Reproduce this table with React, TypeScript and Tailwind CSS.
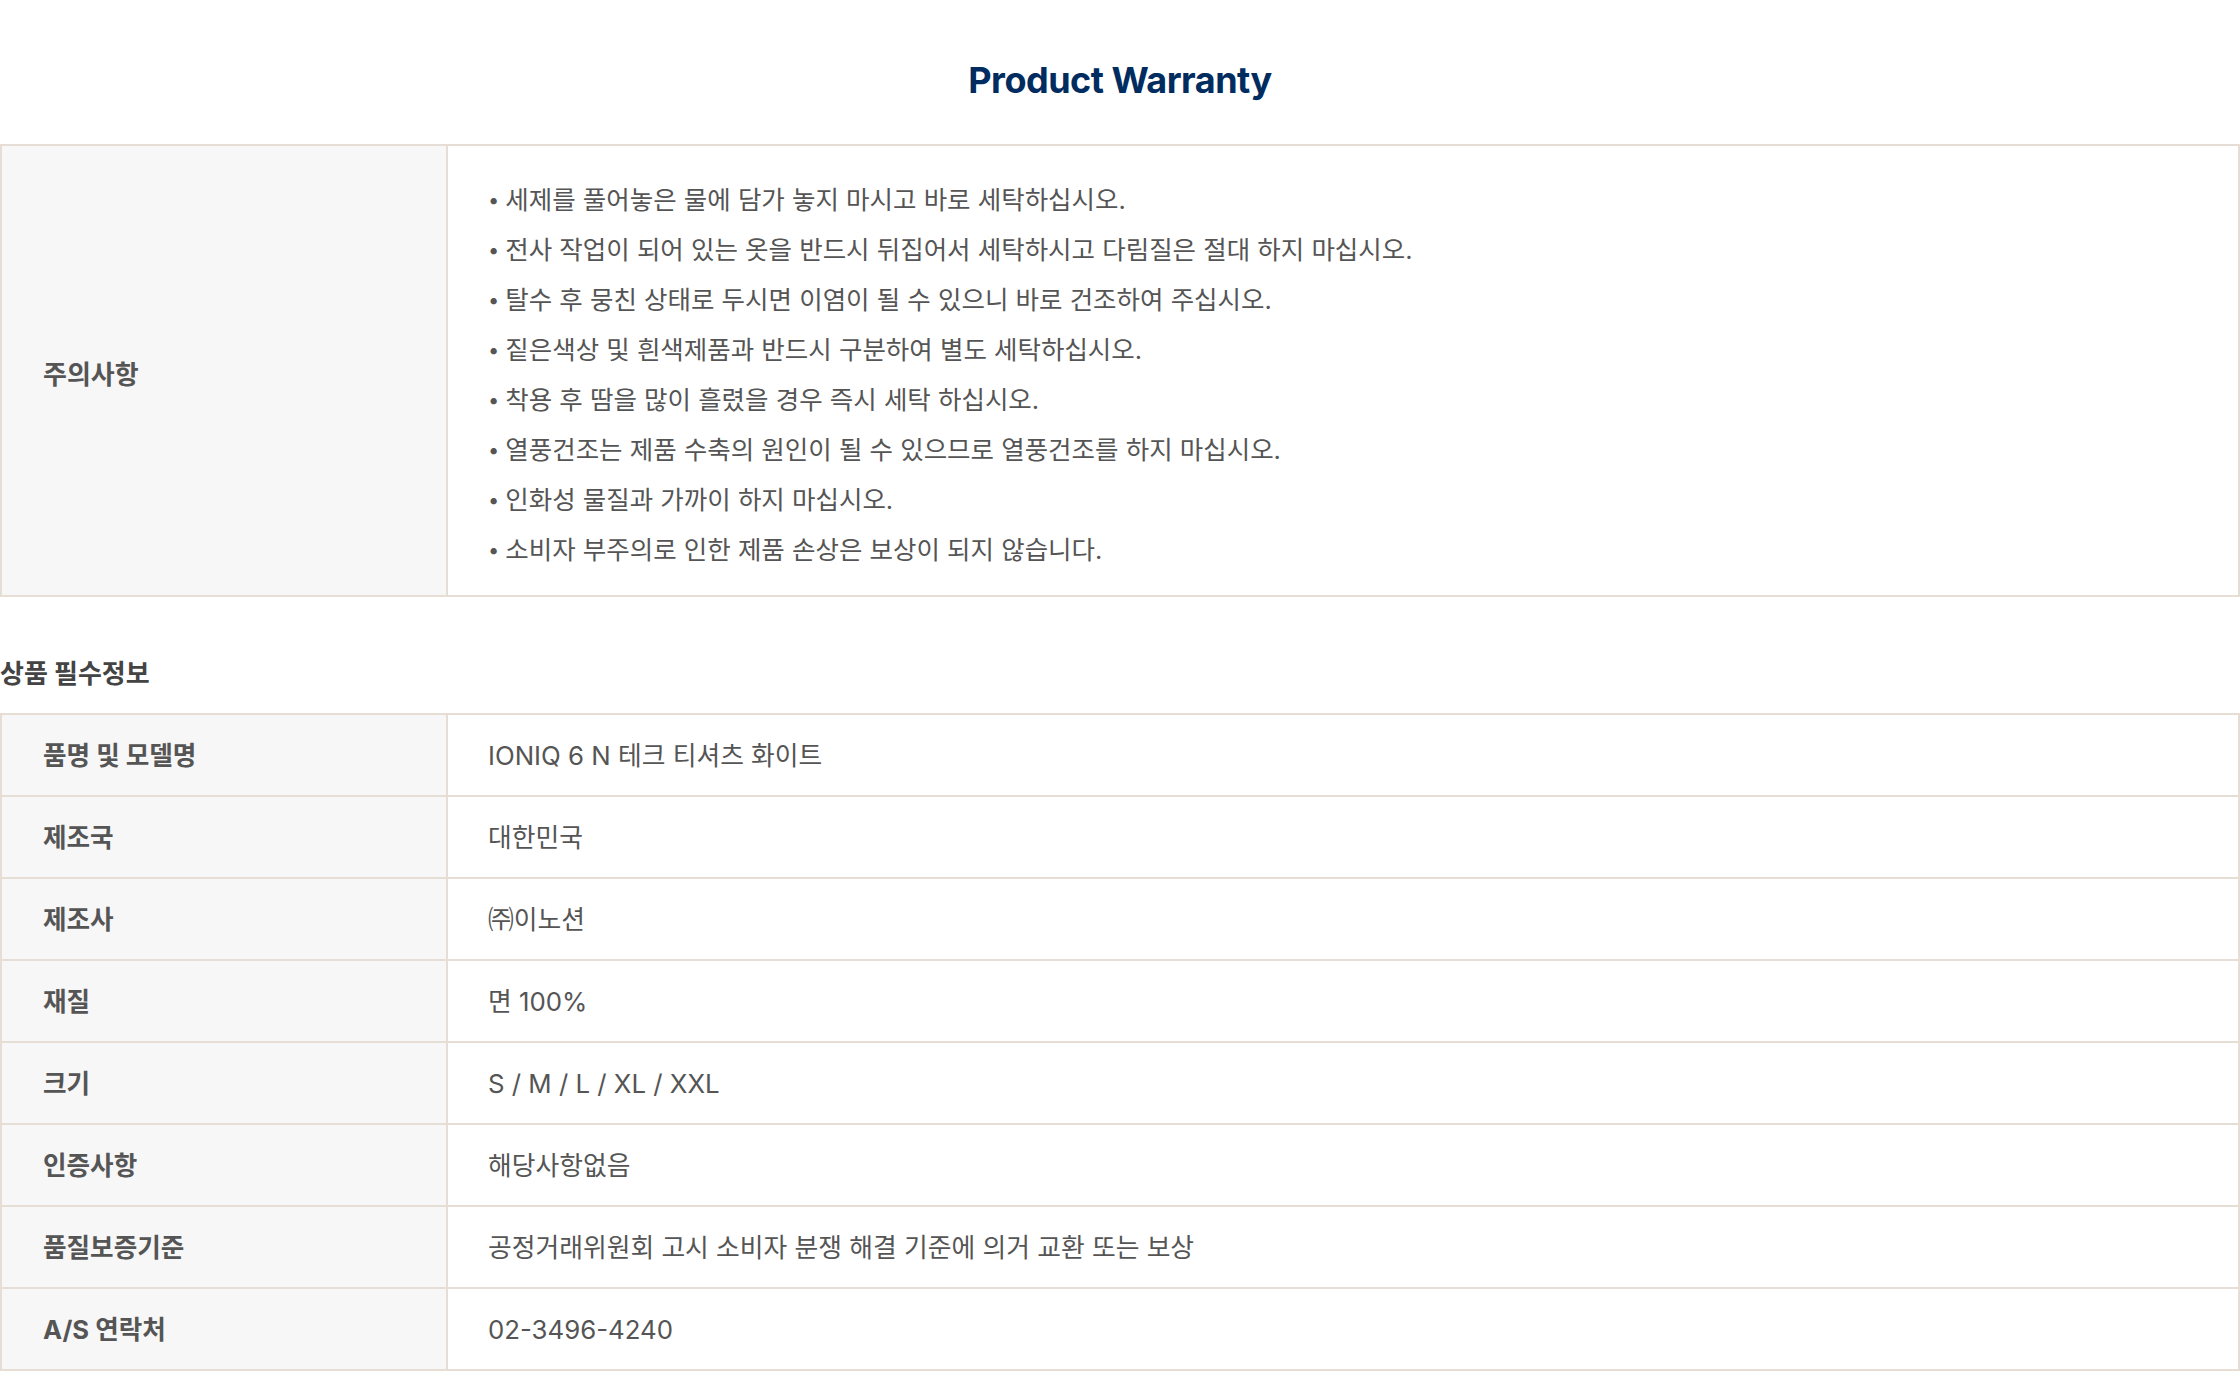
import React from "react";

const notes = [
  "세제를 풀어놓은 물에 담가 놓지 마시고 바로 세탁하십시오.",
  "전사 작업이 되어 있는 옷을 반드시 뒤집어서 세탁하시고 다림질은 절대 하지 마십시오.",
  "탈수 후 뭉친 상태로 두시면 이염이 될 수 있으니 바로 건조하여 주십시오.",
  "짙은색상 및 흰색제품과 반드시 구분하여 별도 세탁하십시오.",
  "착용 후 땀을 많이 흘렸을 경우 즉시 세탁 하십시오.",
  "열풍건조는 제품 수축의 원인이 될 수 있으므로 열풍건조를 하지 마십시오.",
  "인화성 물질과 가까이 하지 마십시오.",
  "소비자 부주의로 인한 제품 손상은 보상이 되지 않습니다.",
];

const info: [string, string][] = [
  ["품명 및 모델명", "IONIQ 6 N 테크 티셔츠 화이트"],
  ["제조국", "대한민국"],
  ["제조사", "㈜이노션"],
  ["재질", "면 100%"],
  ["크기", "S / M / L / XL / XXL"],
  ["인증사항", "해당사항없음"],
  ["품질보증기준", "공정거래위원회 고시 소비자 분쟁 해결 기준에 의거 교환 또는 보상"],
  ["A/S 연락처", "02-3496-4240"],
];

const font = { fontFamily: '"Inter", "Noto Sans CJK KR", sans-serif' };

export default function App() {
  return (
    <div className="w-[2240px] bg-white text-[#555]" style={font}>
      <div className="h-[144px] flex justify-center pt-[56px]">
        <h1 className="text-[36px] leading-[48px] font-bold text-[#002c5f] tracking-[-0.5px]">
          Product Warranty
        </h1>
      </div>

      <div className="grid grid-cols-[446px_1fr] border-2 border-[#e6ddd5]">
        <div className="bg-[#f7f7f7] border-r-2 border-[#e6ddd5] flex items-center pl-[41px] pt-[8px] text-[26px] font-bold text-[#555]">
          주의사항
        </div>
        <ul className="pl-[40px] pt-[29px] pb-[20px] text-[25.5px] leading-[50px] text-[#555]">
          {notes.map((n) => (
            <li key={n} className="flex">
              <span className="mr-[6px] text-[20px]">•</span>
              <span>{n}</span>
            </li>
          ))}
        </ul>
      </div>

      <h2 className="pt-[56px] pb-[18px] leading-[42px] text-[26px] font-bold text-[#444]">
        상품 필수정보
      </h2>

      <div className="border-t-2 border-x-2 border-[#e6ddd5]">
        {info.map(([k, v]) => (
          <div key={k} className="grid grid-cols-[446px_1fr] h-[82px] border-b-2 border-[#e6ddd5]">
            <div className="bg-[#f7f7f7] border-r-2 border-[#e6ddd5] flex items-center pl-[41px] pt-[2px] text-[25.6px] font-bold text-[#555]">
              {k}
            </div>
            <div className="flex items-center pl-[40px] pt-[2px] text-[25.8px] text-[#555]">
              {v}
            </div>
          </div>
        ))}
      </div>
      <div className="h-[25px]" />
    </div>
  );
}
